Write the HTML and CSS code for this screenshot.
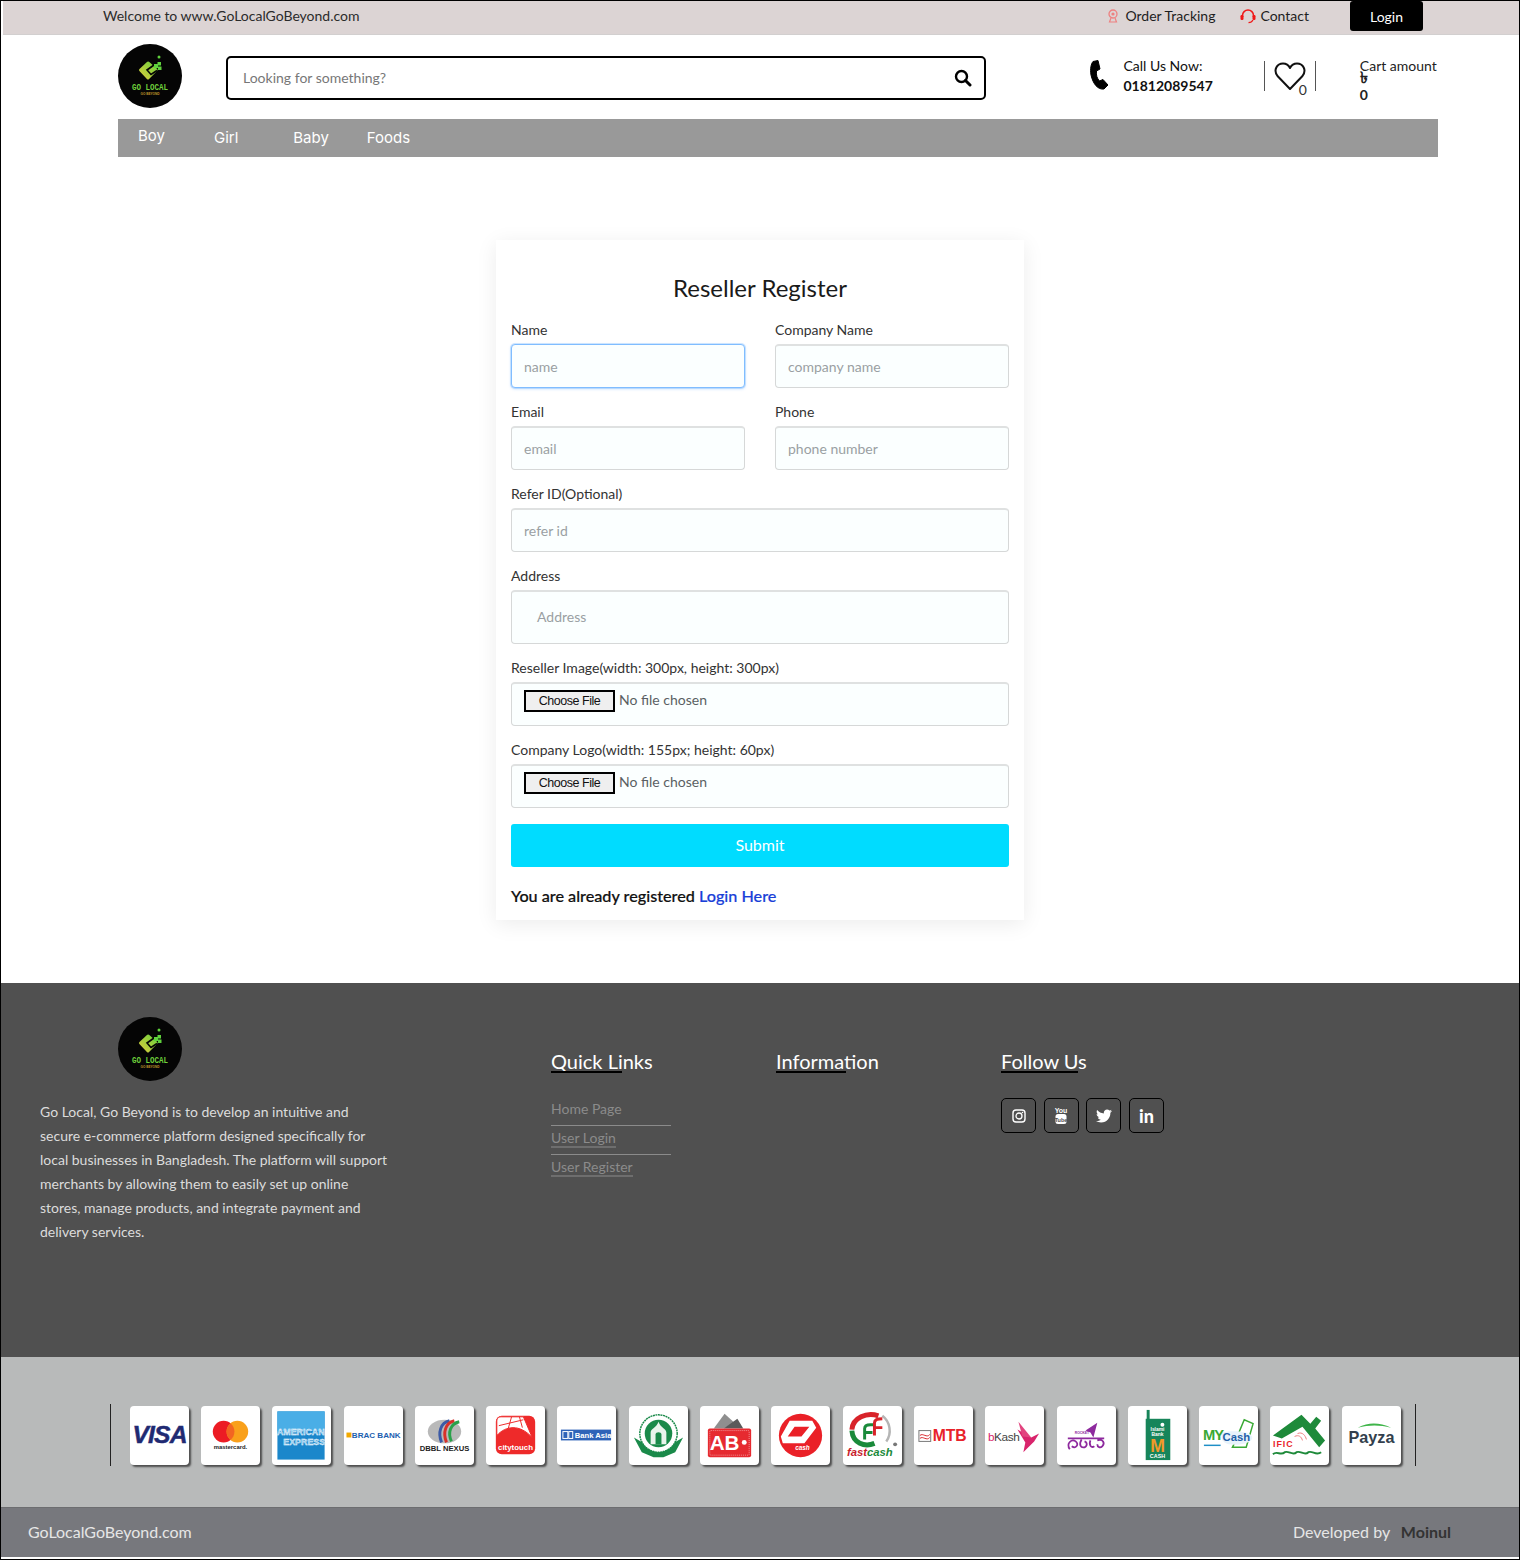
FILE: index.html
```html
<!DOCTYPE html>
<html lang="en">
<head>
    <meta charset="UTF-8">
    <meta name="viewport" content="width=device-width, initial-scale=1.0">
    <title>Reseller Register</title>
    <link rel="stylesheet" href="styles.css">
</head>
<body>
<svg class="defs" width="0" height="0">
    <defs>
        <linearGradient id="logoGreen" x1="0" y1="1" x2="1" y2="0">
            <stop offset="0" stop-color="#d8cc3c"/>
            <stop offset="1" stop-color="#6fd23c"/>
        </linearGradient>
        <symbol id="brand" viewBox="0 0 64 64">
            <circle cx="32" cy="32" r="32" fill="#050505"/>
            <path d="M30 19 L38 26 L30 34 L22.500 26 Z" fill="url(#logoGreen)" stroke="url(#logoGreen)" stroke-width="3" stroke-linejoin="round"/>
            <path d="M36 21 L29 26 L33 30.500 L39 26.500" fill="none" stroke="#050505" stroke-width="1.600"/>
            <rect x="36" y="20" width="4" height="4" fill="#5fd23c"/>
            <rect x="39.500" y="18" width="3.500" height="3.500" fill="#5fd23c"/>
            <rect x="40" y="22.500" width="3.500" height="3.500" fill="#5fd23c"/>
            <circle cx="41" cy="13" r="1.500" fill="#5fd23c"/>
            <text x="32" y="46" textLength="36" lengthAdjust="spacingAndGlyphs" class="brand-name">GO LOCAL</text>
            <text x="32" y="51" textLength="19" lengthAdjust="spacingAndGlyphs" class="brand-sub">GO BEYOND</text>
        </symbol>
    </defs>
</svg>

<div class="page">
    <div class="topbar">
        <div class="welcome">Welcome to www.GoLocalGoBeyond.com</div>
        <div class="top-links">
            <a class="top-link track" href="#">
                <svg width="10" height="14" viewBox="0 0 10 14"><circle cx="5" cy="5" r="4" fill="none" stroke="#ee8080" stroke-width="1.300"/><circle cx="5" cy="5" r="1.600" fill="#ee8080"/><path d="M3 9 L1.500 13 H8.500 L7 9" fill="none" stroke="#ee8080" stroke-width="1.200"/></svg>
                Order Tracking
            </a>
            <a class="top-link contact" href="#">
                <svg width="16" height="15" viewBox="0 0 16 15"><path d="M2.500 8 V6.500 A5.500 5.500 0 0 1 13.500 6.500 V8" fill="none" stroke="#f01818" stroke-width="1.500"/><rect x="0.500" y="6" width="3" height="5" rx="1.200" fill="#f01818"/><rect x="12.500" y="6" width="3" height="5" rx="1.200" fill="#f01818"/><path d="M13 11 C12 13 10.500 13.700 8.500 13.700" fill="none" stroke="#f01818" stroke-width="1.200"/></svg>
                Contact
            </a>
            <a class="login-btn" href="#">Login</a>
        </div>
    </div>

    <header class="header">
        <svg class="logo"><use href="#brand"/></svg>
        <form class="search">
            <input class="search-input" type="text" placeholder="Looking for something?">
            <svg width="18" height="18" viewBox="0 0 18 18"><circle cx="7.500" cy="7.500" r="5.500" fill="none" stroke="#000" stroke-width="2.400"/><path d="M11.500 11.500 L16 16" stroke="#000" stroke-width="3" stroke-linecap="round"/></svg>
        </form>
        <div class="call">
            <svg width="18" height="30" viewBox="0 0 18 30"><path d="M3 1.500 L8 .5 L10 9 L6.500 11 C6 15 7 18.500 9.500 21 L13 19.500 L18 25 L14 29 C8 30 3 24 1 15 C0 9 1 4 3 1.500Z" fill="#000" stroke="#000" stroke-linejoin="round"/></svg>
            <div class="call-text">Call Us Now:<br><b>01812089547</b></div>
        </div>
        <div class="wish">
            <svg width="32" height="30" viewBox="0 0 32 30"><path d="M16 28 L3.500 15 C-1 9 3 2.500 9 2.500 C12 2.500 14.500 4 16 7 C17.500 4 20 2.500 23 2.500 C29 2.500 33 9 28.500 15 Z" fill="none" stroke="#111" stroke-width="2" stroke-linejoin="round"/></svg>
            <span class="wish-count">0</span>
        </div>
        <div class="cart">
            <div>Cart amount</div>
            <div class="taka">৳</div>
            <div class="cart-total">0</div>
        </div>
    </header>

    <nav class="nav">
        <a class="nav-boy" href="#">Boy</a>
        <a class="nav-girl" href="#">Girl</a>
        <a class="nav-baby" href="#">Baby</a>
        <a class="nav-foods" href="#">Foods</a>
    </nav>

    <main class="main">
        <form class="card">
            <h2 class="card-title">Reseller Register</h2>
            <div class="form-row">
                <div class="form-group">
                    <label>Name</label>
                    <input class="form-control is-active" type="text" placeholder="name">
                </div>
                <div class="form-group">
                    <label>Company Name</label>
                    <input class="form-control" type="text" placeholder="company name">
                </div>
            </div>
            <div class="form-row">
                <div class="form-group">
                    <label>Email</label>
                    <input class="form-control" type="text" placeholder="email">
                </div>
                <div class="form-group">
                    <label>Phone</label>
                    <input class="form-control" type="text" placeholder="phone number">
                </div>
            </div>
            <div class="form-group">
                <label>Refer ID(Optional)</label>
                <input class="form-control" type="text" placeholder="refer id">
            </div>
            <div class="form-group">
                <label>Address</label>
                <textarea class="form-control address" placeholder="Address"></textarea>
            </div>
            <div class="form-group">
                <label>Reseller Image(width: 300px, height: 300px)</label>
                <input class="form-control file" type="file">
            </div>
            <div class="form-group last">
                <label>Company Logo(width: 155px; height: 60px)</label>
                <input class="form-control file" type="file">
            </div>
            <button class="submit" type="button">Submit</button>
            <p class="already">You are already registered <a href="#">Login Here</a></p>
        </form>
    </main>

    <footer class="footer">
        <div class="about">
            <svg class="logo footer-logo"><use href="#brand"/></svg>
            <p>Go Local, Go Beyond is to develop an intuitive and secure e-commerce platform designed specifically for local businesses in Bangladesh. The platform will support merchants by allowing them to easily set up online stores, manage products, and integrate payment and delivery services.</p>
        </div>
        <div class="foot-col">
            <h3 class="foot-title"><span class="w-quick">Quick Links</span></h3>
            <ul class="foot-links">
                <li><a href="#">Home Page</a></li>
                <li><a class="under" href="#">User Login</a></li>
                <li class="end"><a class="under" href="#">User Register</a></li>
            </ul>
        </div>
        <div class="foot-col">
            <h3 class="foot-title"><span class="w-info">Information</span></h3>
        </div>
        <div class="foot-col">
            <h3 class="foot-title"><span class="w-follow">Follow Us</span></h3>
            <div class="socials">
                <a class="social" href="#"><svg width="14" height="14" viewBox="0 0 14 14"><rect x="1" y="1" width="12" height="12" rx="3" fill="none" stroke="#fff" stroke-width="1.400"/><circle cx="7" cy="7" r="3" fill="none" stroke="#fff" stroke-width="1.300"/><circle cx="10.500" cy="3.500" r=".8" fill="#fff"/></svg></a>
                <a class="social" href="#"><svg width="14" height="18" viewBox="0 0 14 18"><text x="7" y="6" class="yt-you">You</text><rect x="1.500" y="7" width="11" height="10" rx="2.500" fill="#fff"/><text x="7" y="14.500" class="yt-tube">Tube</text></svg></a>
                <a class="social" href="#"><svg width="16" height="16" viewBox="0 0 512 512"><path fill="#fff" d="M459.37 151.716c.325 4.548.325 9.097.325 13.645 0 138.72-105.583 298.558-298.558 298.558-59.452 0-114.68-17.219-161.137-47.106 8.447.974 16.568 1.299 25.34 1.299 49.055 0 94.213-16.568 130.274-44.832-46.132-.975-84.792-31.188-98.112-72.772 6.498.974 12.995 1.624 19.818 1.624 9.421 0 18.843-1.3 27.614-3.573-48.081-9.747-84.143-51.98-84.143-102.985v-1.299c13.969 7.797 30.214 12.67 47.431 13.319-28.264-18.843-46.781-51.005-46.781-87.391 0-19.492 5.197-37.36 14.294-52.954 51.655 63.675 129.3 105.258 216.365 109.807-1.624-7.797-2.599-15.918-2.599-24.04 0-57.828 46.782-104.934 104.934-104.934 30.213 0 57.502 12.67 76.67 33.137 23.715-4.548 46.456-13.32 66.599-25.34-7.798 24.366-24.366 44.833-46.132 57.827 21.117-2.273 41.584-8.122 60.426-16.243-14.292 20.791-32.161 39.308-52.628 54.253z"/></svg></a>
                <a class="social in" href="#">in</a>
            </div>
        </div>
    </footer>

    <section class="pay">
        <span class="pay-sep"></span>
        <div class="pay-list">
            <div class="tile"><svg viewBox="0 0 60 60"><text x="30" y="38" class="t-visa">VISA</text></svg></div>
            <div class="tile"><svg viewBox="0 0 60 60"><circle cx="23" cy="26" r="11" fill="#ec1c24"/><circle cx="37" cy="26" r="11" fill="#f9a01b"/><path d="M30 17.500 A11 11 0 0 1 30 34.500 A11 11 0 0 1 30 17.500Z" fill="#f26522"/><text x="30" y="44" class="t-mc">mastercard.</text></svg></div>
            <div class="tile"><svg viewBox="0 0 60 60"><rect x="5.500" y="5.500" width="48" height="49" fill="#1b87cb"/><rect x="5.500" y="5.500" width="48" height="20" fill="#4aaee6"/><text x="5" y="29" class="t-amex">AMERICAN</text><text x="54" y="40" class="t-amex end">EXPRESS</text></svg></div>
            <div class="tile"><svg viewBox="0 0 60 60"><rect x="2.500" y="27" width="5" height="5" fill="#f2a900"/><text x="8" y="33" class="t-brac">BRAC BANK</text></svg></div>
            <div class="tile"><svg viewBox="0 0 60 60"><ellipse cx="30" cy="26" rx="17" ry="12" fill="#b9b9b9"/><path d="M35 15 C26 17 23 27 27 37" fill="none" stroke="#3c5aa6" stroke-width="3"/><path d="M40 15 C31 17 28 27 32 37" fill="none" stroke="#d8312a" stroke-width="3"/><path d="M45 16 C36 18 33 27 37 36" fill="none" stroke="#2aa14a" stroke-width="3"/><text x="30" y="46" class="t-dbbl">DBBL NEXUS</text></svg></div>
            <div class="tile"><svg viewBox="0 0 60 60"><rect x="10" y="10" width="40" height="39" rx="6" fill="#ee2a2a"/><path d="M11 30 C20 20 34 18 47 32 L38 11 H16 C12 11 11 13 11 16Z" fill="#fff" stroke="#ee2a2a"/><path d="M13 20 L38 14 M26 11 L22 25 M34 11 L37 22" stroke="#ee2a2a" stroke-width="1"/><text x="30" y="45" class="t-city">citytouch</text></svg></div>
            <div class="tile"><svg viewBox="0 0 60 60"><rect x="4" y="24" width="51" height="11" fill="#2f63b8"/><rect x="6" y="26" width="5" height="7" fill="none" stroke="#fff"/><rect x="12" y="26" width="4" height="7" fill="none" stroke="#fff"/><text x="18" y="33" class="t-asia">Bank Asia</text></svg></div>
            <div class="tile"><svg viewBox="0 0 60 60"><path d="M5 32 L13 47 L25 52 H35 L47 47 L55 32 L48 36 H12Z" fill="#1a8a4a"/><circle cx="30" cy="28" r="19" fill="#fff" stroke="#1a8a4a" stroke-width="1.500" stroke-dasharray="2 .6"/><circle cx="30" cy="28" r="14" fill="#1a8a4a"/><path d="M22 39 V27 C22 23 28 22 30 16 C32 22 38 23 38 27 V39Z" fill="#e9f4ec"/><path d="M27 39 V29 C27 26 33 26 33 29 V39Z" fill="#1a8a4a"/></svg></div>
            <div class="tile"><svg viewBox="0 0 60 60"><path d="M14 23 L25 8 L35 17 L24 23Z" fill="#8f8f8f"/><path d="M24 23 L38 13 L44 23Z" fill="#5a5a5a"/><rect x="8" y="23" width="44" height="29" rx="2" fill="#e62a30"/><rect x="10" y="25" width="40" height="25" rx="1" fill="none" stroke="#fff" stroke-width=".5" stroke-dasharray="1 1"/><text x="25" y="45" class="t-ab">AB</text><circle cx="45" cy="37" r="2.500" fill="#fff"/></svg></div>
            <div class="tile"><svg viewBox="0 0 60 60"><circle cx="30" cy="30" r="22" fill="#ea2027"/><path d="M19 15 H42 L46 22 L34 38 H12 L10 31Z M24 21 L17 31 H31 L39 21Z" fill="#fff" fill-rule="evenodd"/><text x="32" y="45" class="t-qcash">cash</text></svg></div>
            <div class="tile"><svg viewBox="0 0 60 60"><path d="M36 10 C24 6 10 12 9 24" fill="none" stroke="#d8232a" stroke-width="5"/><path d="M9 25 C10 38 22 42 32 38" fill="none" stroke="#1a8a3a" stroke-width="5"/><path d="M40 10 C48 16 50 28 44 36" fill="none" stroke="#b5b5b5" stroke-width="2.500"/><path d="M22 34 V23 C22 20 24 19 28 19 H32 M22 27 H30" fill="none" stroke="#1a8a3a" stroke-width="3"/><path d="M32 30 V17 C32 14 35 13 40 13 M32 22 H40" fill="none" stroke="#d8232a" stroke-width="3"/><text x="4" y="51" class="t-fast">fast<tspan class="t-fast-green">cash</tspan></text><circle cx="53" cy="39" r="2" fill="#777"/></svg></div>
            <div class="tile"><svg viewBox="0 0 60 60"><rect x="5" y="25" width="12" height="11" fill="#fff" stroke="#777"/><path d="M6 30 C9 27 13 33 16 29 M6 33 C9 30 13 36 16 32" fill="none" stroke="#d8232a"/><text x="19" y="36" class="t-mtb">MTB</text></svg></div>
            <div class="tile"><svg viewBox="0 0 60 60"><text x="3" y="36" class="t-bkash"><tspan class="t-bkash-b">b</tspan>Kash</text><path d="M33 24 L47 32 L55 28 L50 36 L39 47 L41 37Z" fill="#d9246c"/><path d="M34 16 L47 32 L38 31Z" fill="#e2447f"/></svg></div>
            <div class="tile"><svg viewBox="0 0 60 60"><path d="M29 25 L41 17 L37 32 L34 27Z" fill="#8e2a9e"/><text x="18" y="28" class="t-rocket">ROCKET</text><path d="M11 33 H48 M13 44 C9 38 15 33 19 36 C23 39 19 44 15 41 M25 34 C22 39 24 43 28 42 C31 41 31 37 28 36 M34 35 C32 40 35 43 38 41 M41 35 C47 33 49 38 46 41 C44 43 41 42 41 39" fill="none" stroke="#8e2a9e" stroke-width="1.800"/></svg></div>
            <div class="tile"><svg viewBox="0 0 60 60"><rect x="19" y="4" width="3" height="10" fill="#17855a"/><rect x="18" y="13" width="25" height="42" fill="#17855a"/><circle cx="35" cy="19" r="2" fill="#fff"/><text x="30" y="25" class="t-islami">Islami</text><text x="30" y="30" class="t-islami">Bank</text><text x="30" y="47" class="t-m">M</text><text x="30" y="53" class="t-mcash">CASH</text></svg></div>
            <div class="tile"><svg viewBox="0 0 60 60"><path d="M36 38 L46 14 L55 18 L48 42 L34 42Z" fill="none" stroke="#3aa935" stroke-width="1.500"/><path d="M30 39 C44 41 56 36 54 31 C50 25 32 25 24 27 C21 33 24 37 30 39Z" fill="#e8f3fb"/><text x="4" y="35" class="t-my">MY</text><text x="24" y="36" class="t-mycash">Cash</text><path d="M5 40 H22" stroke="#1f8fc7" stroke-width="1.500"/></svg></div>
            <div class="tile"><svg viewBox="0 0 60 60"><path d="M3 30 L32 9 L41 18 L47 11 L52 15 L46 23 L56 35 L50 42 L33 21 L12 33Z" fill="#1e8a3a"/><text x="3" y="42" class="t-ific">IFIC</text><path d="M3 49 C7 45 11 51 15 47 C19 45 23 51 27 47 C31 45 35 51 39 47 C43 45 47 51 52 47" fill="none" stroke="#1e8a3a" stroke-width="2"/><path d="M25 31 C29 29 32 31 33 35 M28 28 C33 26 36 30 37 34" fill="none" stroke="#ef7f7f" stroke-width="1"/></svg></div>
            <div class="tile"><svg viewBox="0 0 60 60"><path d="M16 22 C28 16 38 17 50 22 C38 19 28 19 16 22Z" fill="#3fb54a"/><text x="30" y="38" class="t-payza">Payza</text></svg></div>
        </div>
        <span class="pay-sep"></span>
    </section>

    <div class="bottom">
        <span>GoLocalGoBeyond.com</span>
        <span>Developed by <b class="dev">Moinul</b></span>
    </div>
</div>
</body>
</html>
```

FILE: styles.css
```css
* {
    box-sizing: border-box;
}
body {
    margin: 0;
    font-family: Lato, "Noto Sans", sans-serif;
    font-size: 14px;
    color: #212529;
    background-color: #fff;
}
a {
    text-decoration: none;
    color: inherit;
}
.defs {
    position: absolute;
}
.page {
    height: 1560px;
    border: 1px solid #000;
    display: flex;
    flex-direction: column;
}

/* top bar */
.topbar {
    height: 34px;
    margin-left: 2px;
    padding-left: 100px;
    display: flex;
    justify-content: space-between;
    background-color: #dcd4d4;
    border-bottom: 1px solid #d2cfcf;
    line-height: 30px;
}
.welcome {
    color: #2b2b2b;
}
.top-links {
    display: flex;
    margin-right: 96px;
}
.top-link {
    display: flex;
    align-items: center;
    height: 30px;
    color: #1e1e1e;
}
.track {
    gap: 7px;
}
.contact {
    gap: 4px;
    margin-left: 25px;
}
.login-btn {
    width: 73px;
    height: 30px;
    margin-left: 41px;
    text-align: center;
    color: #fff;
    background-color: #000;
    border-radius: 3px;
    line-height: 32px;
}

/* header */
.header {
    height: 84px;
    padding-left: 117px;
    display: flex;
    align-items: flex-start;
}
.logo {
    width: 64px;
    height: 64px;
    display: block;
}
.header > .logo {
    margin-top: 9px;
}
.brand-name {
    font-family: "Liberation Mono", monospace;
    font-size: 8.500px;
    font-weight: bold;
    fill: #6fd23c;
    text-anchor: middle;
}
.brand-sub {
    font-family: "Liberation Sans", sans-serif;
    font-size: 3px;
    font-weight: bold;
    fill: #c39a2a;
    text-anchor: middle;
}
.search {
    width: 760px;
    height: 44px;
    margin: 21px 0 0 44px;
    padding: 0 12px 0 15px;
    display: flex;
    align-items: center;
    border: 2px solid #000;
    border-radius: 5px;
}
.search-input {
    flex: 1;
    padding: 0 0 2px;
    border: 0;
    outline: 0;
    font-family: inherit;
    font-size: 14px;
}
.search-input::placeholder {
    color: #777;
    opacity: 1;
}
.call {
    display: flex;
    margin: 25px 0 0 104px;
    color: #111;
}
.call-text {
    margin-left: 15.500px;
    line-height: 20px;
    margin-top: -4px;
}
.wish {
    position: relative;
    width: 52px;
    height: 30px;
    margin: 26px 0 0 51px;
    padding-left: 9px;
    border-left: 1px solid #555;
    border-right: 1px solid #555;
}
.wish-count {
    position: absolute;
    left: 34px;
    top: 20px;
    color: #333;
}
.cart {
    margin: 21px 0 0 44px;
    line-height: 20px;
    color: #222;
}
.taka {
    height: 10px;
    margin-top: -3px;
    line-height: 10px;
    font-weight: bold;
    font-family: "DejaVu Sans", "Noto Sans", sans-serif;
    font-size: 16px;
}
.cart-total {
    font-weight: bold;
    margin-top: 2px;
}

/* menu */
.nav {
    height: 38px;
    margin: 0 81px 0 117px;
    display: flex;
    background-color: #999;
    font-family: Inter, sans-serif;
    font-size: 15px;
    color: #fff;
    line-height: 38px;
}
.nav-boy {
    margin-left: 20px;
    line-height: 34px;
}
.nav-girl {
    margin-left: 49px;
}
.nav-baby {
    margin-left: 55px;
}
.nav-foods {
    margin-left: 38px;
}

/* form */
.main {
    height: 826px;
    padding-top: 83px;
}
.card {
    width: 528px;
    height: 680px;
    margin: 0 auto;
    padding: 31px 15px 0;
    background-color: #fff;
    box-shadow: 0 4px 20px rgba(0, 0, 0, .08);
}
.card-title {
    margin: 0 0 14px;
    font-size: 24px;
    font-weight: 400;
    line-height: 33px;
    text-align: center;
    color: #1a1a1a;
}
.form-row {
    display: grid;
    grid-template-columns: 234px 234px;
    gap: 30px;
}
.form-group {
    margin-bottom: 12px;
}
.form-group.last {
    margin-bottom: 16px;
}
.form-group label {
    display: block;
    height: 22px;
    margin-bottom: 4px;
    line-height: 23px;
    color: #333;
}
.form-control {
    display: block;
    width: 100%;
    height: 44px;
    padding: 0 12px;
    font-family: inherit;
    font-size: 14px;
    color: #495057;
    background-color: #fbffff;
    border: 1px solid #d6d8d8;
    border-top-width: 2px;
    border-top-color: #dfe1e1;
    border-radius: 4px;
    outline: 0;
}
.form-control::placeholder {
    color: #9a9fa3;
    opacity: 1;
}
.is-active {
    border: 1px solid #80bdff;
    box-shadow: 0 0 0 1px rgba(128, 189, 255, .35), 0 1px 3px rgba(0, 123, 255, .25);
}
.address {
    height: 54px;
    padding: 16px 25px 0;
    resize: none;
}
.file {
    padding: 4px 12px 0;
    color: #5a5f63;
    line-height: 24px;
}
.file::file-selector-button {
    width: 91px;
    height: 22px;
    margin-right: 4px;
    padding: 0;
    font-family: "Liberation Sans", sans-serif;
    font-size: 12.500px;
    letter-spacing: -.45px;
    color: #111;
    background-color: #efefef;
    border: 2px solid #000;
    border-radius: 0;
}
.submit {
    display: block;
    width: 100%;
    height: 43px;
    padding-bottom: 3px;
    font-family: inherit;
    font-size: 16px;
    color: #fff;
    background-color: #00dcff;
    border: 0;
    border-radius: 3px;
}
.already {
    margin: 17px 0 0;
    font-size: 16.200px;
    font-weight: 500;
    line-height: 24px;
    color: #111;
    -webkit-text-stroke: .2px #111;
}
.already a {
    color: #1a3fd8;
    -webkit-text-stroke: .2px #1a3fd8;
}

/* footer */
.footer {
    height: 374px;
    padding: 34px 0 0 39px;
    display: flex;
    background-color: #505050;
}
.about {
    width: 511px;
    padding-right: 160px;
    line-height: 24px;
    color: #dcdcdc;
}
.footer-logo {
    margin-left: 78px;
}
.about p {
    margin: 19px 0 0;
}
.foot-col {
    width: 225px;
    padding-top: 31px;
}
.foot-title {
    margin: 0;
    height: 26px;
    font-size: 20px;
    font-weight: 400;
    line-height: 26px;
    color: #fff;
}
.foot-title span {
    display: block;
    position: relative;
}
.foot-title span::after {
    content: "";
    position: absolute;
    left: 0;
    top: 23px;
    height: 2px;
    background-color: #000;
}
.w-quick::after {
    width: 71px;
}
.w-info::after {
    width: 70px;
}
.w-follow::after {
    width: 77px;
}
.foot-links {
    width: 120px;
    margin: 23px 0 0;
    padding: 0;
    list-style: none;
    color: #8b8b8b;
}
.foot-links li {
    height: 29px;
    line-height: 24px;
    border-bottom: 1px solid #8b8b8b;
}
.foot-links li.end {
    border-bottom: 0;
}
.under {
    display: inline-block;
    height: 21px;
    line-height: 22px;
    margin-top: 1px;
    border-bottom: 2px solid #6e6e6e;
    vertical-align: top;
}
.socials {
    display: flex;
    gap: 7.700px;
    margin-top: 24px;
}
.social {
    width: 35px;
    height: 35px;
    display: flex;
    align-items: center;
    justify-content: center;
    border: 1px solid #000;
    border-radius: 5px;
    color: #fff;
}
.in {
    font-size: 18px;
    font-weight: 900;
}
.yt-you,
.yt-tube {
    font-family: "Liberation Sans", sans-serif;
    font-weight: bold;
    text-anchor: middle;
}
.yt-you {
    font-size: 7px;
    fill: #fff;
}
.yt-tube {
    font-size: 5.500px;
    fill: #505050;
}

/* payment strip */
.pay {
    height: 150px;
    padding-left: 109px;
    display: flex;
    align-items: flex-start;
    background-color: #b8baba;
}
.pay-sep {
    width: 1.200px;
    height: 62px;
    margin-top: 47px;
    background-color: #222;
}
.pay-list {
    display: flex;
    gap: 12.3px;
    margin: 49px 14px 0 18.500px;
}
.tile {
    width: 59px;
    height: 59px;
    background-color: #fff;
    border-radius: 4px;
    box-shadow: 2px 2px 2px #4d4d4d;
}
.tile svg {
    display: block;
    width: 59px;
    height: 59px;
}
.tile text {
    font-family: "Liberation Sans", sans-serif;
    font-weight: bold;
}
.t-visa {
    font-size: 25px;
    font-style: italic;
    fill: #1f2a72;
    text-anchor: middle;
    letter-spacing: -.8px;
    stroke: #1f2a72;
    stroke-width: .5px;
}
.t-mc {
    font-size: 6px;
    fill: #222;
    text-anchor: middle;
}
.t-amex {
    font-size: 9px;
    fill: #8cc8ee;
    stroke: #fff;
    stroke-width: .35px;
}
.t-amex.end {
    text-anchor: end;
}
.t-brac {
    font-size: 8.200px;
    fill: #1d5fb0;
}
.t-dbbl {
    font-size: 7.800px;
    fill: #222;
    text-anchor: middle;
}
.t-city {
    font-size: 8px;
    fill: #fff;
    text-anchor: middle;
}
.t-asia {
    font-size: 7.800px;
    fill: #fff;
}
.t-ab {
    font-size: 21px;
    fill: #fff;
    text-anchor: middle;
}
.t-qcash {
    font-size: 6.500px;
    font-style: italic;
    fill: #fff;
    text-anchor: middle;
}
.t-fast {
    font-size: 11.500px;
    font-style: italic;
    fill: #c8202a;
}
.t-fast-green {
    fill: #1a8a3a;
}
.t-mtb {
    font-size: 16px;
    fill: #e8222a;
}
.tile .t-bkash {
    font-size: 12px;
    font-weight: 400;
    fill: #444;
    letter-spacing: -.4px;
}
.t-bkash-b {
    fill: #d9246c;
}
.t-rocket {
    font-size: 3.500px;
    fill: #8e2a9e;
}
.t-islami {
    font-size: 5px;
    fill: #fff;
    text-anchor: middle;
}
.t-m {
    font-size: 18px;
    fill: #f09a28;
    text-anchor: middle;
}
.t-mcash {
    font-size: 5.500px;
    fill: #fff;
    text-anchor: middle;
}
.t-my {
    font-size: 15px;
    fill: #3aa935;
    letter-spacing: -1px;
}
.t-mycash {
    font-size: 11.500px;
    fill: #1f5fa8;
}
.t-ific {
    font-size: 9px;
    fill: #e8222a;
    letter-spacing: 1px;
}
.t-payza {
    font-size: 16.500px;
    fill: #333f4d;
    text-anchor: middle;
}

/* bottom bar */
.bottom {
    height: 50px;
    padding: 0 68px 2px 27px;
    display: flex;
    justify-content: space-between;
    align-items: center;
    background-color: #77787d;
    border-top: 1px solid #6c6d70;
    font-size: 16px;
    color: #e6e6e6;
}
.dev {
    margin-left: 7px;
    color: #333;
}
```
